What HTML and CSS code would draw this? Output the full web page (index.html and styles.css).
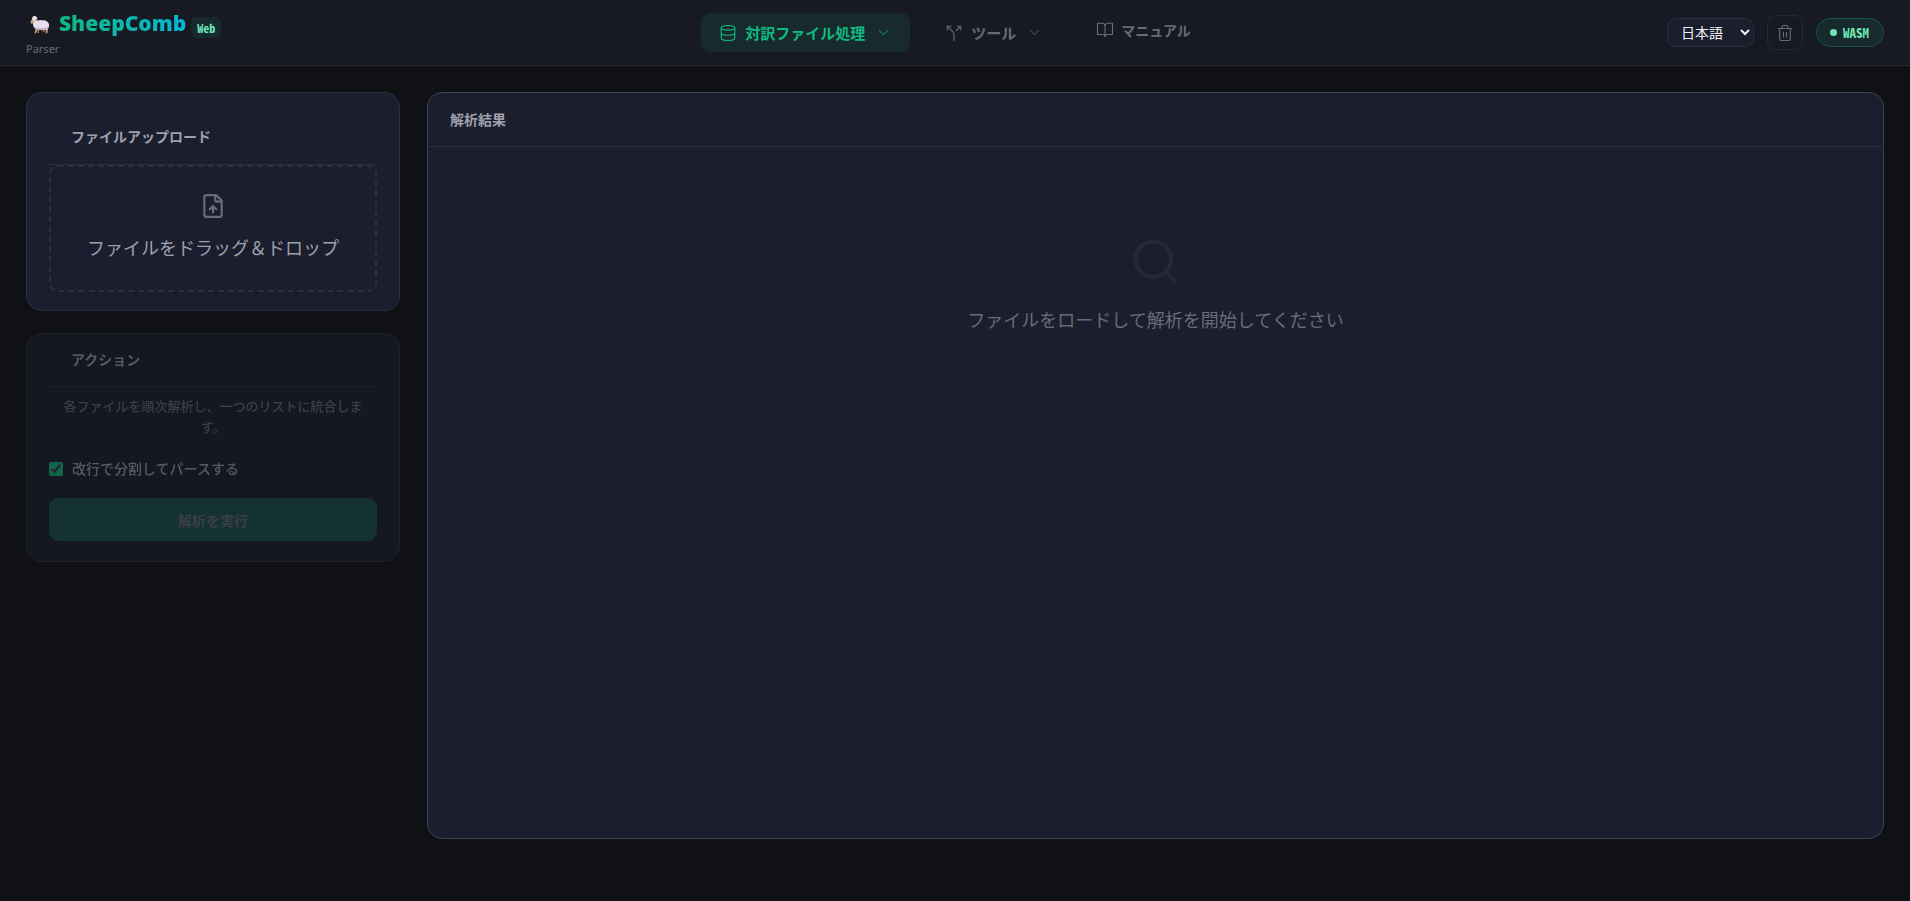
FILE: index.html
```html
<!DOCTYPE html>
<html lang="ja">
<head>
<meta charset="utf-8">
<meta name="viewport" content="width=device-width, initial-scale=1">
<title>SheepComb Parser</title>
<link rel="stylesheet" href="styles.css">
</head>
<body>
<header class="topbar">
  <div class="brand">
    <div class="brand-row">
      <svg class="sheep" viewBox="0 0 24 24" aria-hidden="true">
        <path d="M7 15l-.6 3.500-1.200 3.500h2.300l1.600-5zM17.500 15l1.600 3-.5 4h2.200l.9-5-.8-3z" fill="#c99a76"/>
        <path d="M9 15v6.500h2V16zM17 15l-1.800 5.500h2L19 16z" fill="#94705c"/>
        <path d="M4 7c2-1.500 4-1 6-.4 2-1 3.400-.8 5 0 2-.8 4 0 5.500 1.400 2.500 1 3 5 1.800 7-.5 2.200-2.600 3-4.800 2.500-2 1-4 1-5.500 0-2.200 1-4.500.4-6-1.500C3.500 14.500 3 11 4 7z" fill="#e6deee"/>
        <path d="M4.500 14c3 2 5 1 7 2 2-1 7 0 10.500-2-.3 2.600-2.400 4-4.800 3.500-2 1-4 1-5.500 0-3 1-6-.5-7.200-3.500z" fill="#bdb1cb"/>
        <path d="M2 5.500C1.200 7 .3 9 1 10c1.200 1 3-.3 4.500-1.400L7 6.500 4.500 4z" fill="#d9a883"/>
        <path d="M2.500 5C2.300 2.500 4 1 6 1.400 8.300 1.200 9 3.500 8.500 5.500 8 8 6 9 5.400 7.600 4.800 6 4 6 2.500 5z" fill="#eee8f3"/>
        <path d="M6 5l2.800-.6C9.500 5.500 8.500 7 7.200 7z" fill="#a57962"/>
      </svg>
      <span class="brand-name">SheepComb</span>
      <span class="brand-tag">Web</span>
    </div>
    <div class="brand-sub">Parser</div>
  </div>
  <nav class="nav">
    <button class="nav-item active" type="button">
      <svg class="icon" viewBox="0 0 24 24"><ellipse cx="12" cy="5" rx="9" ry="3"/><path d="M3 5v14a9 3 0 0 0 18 0V5M3 12a9 3 0 0 0 18 0"/></svg>
      <span>対訳ファイル処理</span>
      <svg class="chevron" viewBox="0 0 24 24"><path d="m4 8 8 8 8-8"/></svg>
    </button>
    <button class="nav-item" type="button">
      <svg class="icon" viewBox="0 0 24 24"><path d="M16 3h5v5M8 3H3v5M12 22v-8.300a4 4 0 0 0-1.172-2.872L3 3M15 9l6-6"/></svg>
      <span>ツール</span>
      <svg class="chevron" viewBox="0 0 24 24"><path d="m4 8 8 8 8-8"/></svg>
    </button>
    <a class="nav-item manual" href="#manual">
      <svg class="icon" viewBox="0 0 24 24"><path d="M2 3h6a4 4 0 0 1 4 4v14a3 3 0 0 0-3-3H2zM22 3h-6a4 4 0 0 0-4 4v14a3 3 0 0 1 3-3h7z"/></svg>
      <span>マニュアル</span>
    </a>
  </nav>
  <div class="tools">
    <select class="lang" aria-label="言語"><option>日本語</option><option>English</option></select>
    <button class="trash" type="button" aria-label="削除">
      <svg class="icon" viewBox="0 0 24 24"><path d="M3 6h18M19 6v14a2 2 0 0 1-2 2H7a2 2 0 0 1-2-2V6M8 6V4a2 2 0 0 1 2-2h4a2 2 0 0 1 2 2v2M10 11v6M14 11v6"/></svg>
    </button>
    <div class="status"><span class="dot"></span>WASM</div>
  </div>
</header>
<main class="layout">
  <aside class="sidebar">
    <section class="card upload">
      <h2 class="card-title">ファイルアップロード</h2>
      <button class="dropzone" type="button">
        <svg class="drop-icon" viewBox="0 0 24 24"><path d="M15 2H6a2 2 0 0 0-2 2v16a2 2 0 0 0 2 2h12a2 2 0 0 0 2-2V7zM14 2v4a2 2 0 0 0 2 2h4M12 12v6M15 15l-3-3-3 3"/></svg>
        <span>ファイルをドラッグ＆ドロップ</span>
      </button>
    </section>
    <section class="card actions">
      <h2 class="card-title">アクション</h2>
      <p class="note">各ファイルを順次解析し、一つのリストに統合します。</p>
      <label class="check" for="split"><input id="split" type="checkbox" checked><span>改行で分割してパースする</span></label>
      <button class="run" type="button">解析を実行</button>
    </section>
  </aside>
  <section class="results">
    <h2 class="results-title">解析結果</h2>
    <div class="empty">
      <svg class="empty-icon" viewBox="0 0 24 24"><circle cx="11" cy="11" r="8"/><path d="m21 21-4.300-4.300"/></svg>
      <p>ファイルをロードして解析を開始してください</p>
    </div>
  </section>
</main>
</body>
</html>
```
FILE: styles.css
```css
* { box-sizing: border-box; }
:root {
  color-scheme: dark;
  --bg: #101115;
  --surface: #1b1e2e;
  --line: #2d2f3f;
  --muted: #6a6b76;
  --text: #a0a0ab;
  --accent: #10b981;
  --mint: #6ee7b7;
}
body {
  margin: 0;
  min-height: 100vh;
  display: flex;
  flex-direction: column;
  background: var(--bg);
  color: var(--text);
  font-family: "Noto Sans", "Noto Sans CJK JP", sans-serif;
  font-size: 14px;
}
button, select { font: inherit; color: inherit; }
h2, p { margin: 0; }
svg {
  display: block;
  flex: none;
  fill: none;
  stroke: currentColor;
  stroke-width: 2;
  stroke-linecap: round;
  stroke-linejoin: round;
}
.topbar {
  display: grid;
  grid-template-columns: 1fr auto 1fr;
  align-items: center;
  height: 66px;
  padding: 0 26px;
  background: #171a23;
  border-bottom: 1px solid #292b35;
}
.brand-row { display: flex; align-items: center; height: 32px; }
.sheep { width: 20px; height: 20px; margin: 0 9px 0 4px; stroke: none; }
.brand-name {
  margin-bottom: 4px;
  font-size: 21px;
  font-weight: 900;
  line-height: 28px;
  background: linear-gradient(90deg, #10b981, #06b6d4);
  background-clip: text;
  color: transparent;
}
.brand-tag {
  margin: 6px 0 0 5px;
  padding: 0 6px;
  border-radius: 5px;
  background: #172a2e;
  color: var(--mint);
  font: 700 12px/21px "Noto Sans Mono CJK JP", "Noto Sans CJK JP", monospace;
}
.brand-sub { font-size: 11px; line-height: 16px; color: var(--muted); }
.nav { display: flex; align-items: center; gap: 17px; }
.nav-item {
  display: flex;
  align-items: center;
  gap: 8px;
  height: 39px;
  padding: 0 18px;
  border: 0;
  border-radius: 9px;
  background: none;
  color: var(--muted);
  font-size: 15px;
  font-weight: 600;
  text-decoration: none;
}
.nav-item.active { background: #172a2e; color: var(--accent); }
.nav-item.manual { padding-bottom: 5px; gap: 7px; font-size: 14px; }
.icon { width: 18px; height: 18px; stroke-width: 1.5; }
.chevron { width: 13px; height: 13px; margin: 0 2px 0 4px; opacity: .6; }
.tools { display: flex; align-items: center; justify-content: flex-end; gap: 13px; }
.lang {
  height: 29px;
  width: 87px;
  padding: 0 0 0 9px;
  border: 1px solid var(--line);
  border-radius: 9px;
  background: var(--surface);
  color: #f0f0f2;
}
.trash {
  display: grid;
  place-items: center;
  width: 36px;
  height: 35px;
  padding: 0;
  border: 1px solid #262832;
  border-radius: 9px;
  background: none;
  color: var(--muted);
}
.status {
  display: flex;
  align-items: center;
  gap: 6px;
  height: 29px;
  padding: 0 14px 0 13px;
  border: 1px solid #165643;
  border-radius: 15px;
  background: #172a2e;
  color: var(--mint);
  font: 700 13px/20px "Noto Sans Mono CJK JP", "Noto Sans CJK JP", monospace;
}
.dot { width: 7px; height: 7px; border-radius: 50%; background: var(--mint); }
.layout {
  flex: 1;
  display: grid;
  grid-template-columns: 374px 1fr;
  gap: 27px;
  padding: 26px 26px 62px;
}
.sidebar { display: flex; flex-direction: column; gap: 22px; }
.card {
  padding: 0 22px 20px;
  border: 1px solid var(--line);
  border-radius: 15px;
  background: var(--surface);
}
.card-title {
  padding: 16px 22px;
  border-bottom: 1px solid var(--line);
  font-size: 14px;
  font-weight: 700;
  line-height: 20px;
}
.upload { padding-bottom: 18px; }
.upload .card-title { padding-top: 34px; padding-bottom: 17px; }
.dropzone {
  display: flex;
  flex-direction: column;
  align-items: center;
  gap: 15px;
  width: 100%;
  padding: 26px 0 28px;
  border: 2px dashed var(--line);
  border-radius: 9px;
  background: none;
  font-size: 18px;
  line-height: 28px;
}
.drop-icon { width: 26px; height: 26px; color: var(--muted); }
.actions { opacity: .5; }
.note {
  padding: 9px 12px 10px;
  color: var(--muted);
  font-size: 13px;
  font-weight: 500;
  line-height: 21px;
  text-align: center;
}
.check { display: flex; align-items: center; gap: 9px; margin-top: 10px; font-weight: 500; line-height: 22px; }
.check input { width: 14px; height: 14px; margin: 0; accent-color: var(--accent); }
.run {
  width: 100%;
  height: 43px;
  margin-top: 18px;
  border: 0;
  border-radius: 9px;
  background: #19534d;
  color: var(--muted);
  font-weight: 700;
}
.results {
  border: 1px solid #41424f;
  border-radius: 15px;
  background: var(--surface);
}
.results-title {
  padding: 16px 22px;
  border-bottom: 1px solid var(--line);
  font-size: 14px;
  font-weight: 700;
  line-height: 21px;
}
.empty {
  display: flex;
  flex-direction: column;
  align-items: center;
  gap: 18px;
  padding-top: 88px;
  color: var(--muted);
  font-size: 18px;
  line-height: 28px;
}
.empty-icon { width: 53px; height: 53px; color: #262836; }
```
